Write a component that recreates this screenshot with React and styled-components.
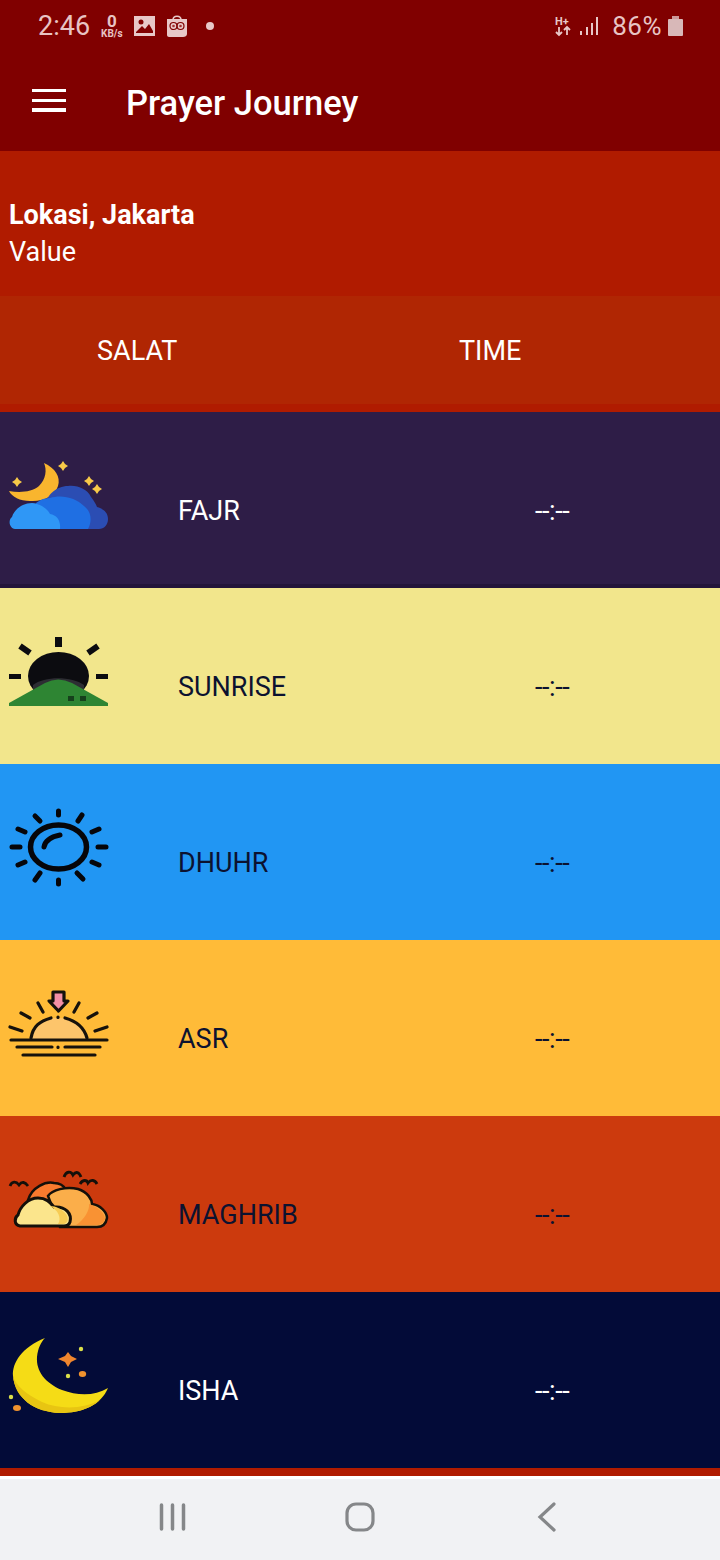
import styled, { createGlobalStyle } from 'styled-components'
import React from 'react'

const GlobalStyle = createGlobalStyle`
    html, body {
        margin: 0;
        padding: 0;
        background: #f1f2f4;
        font-family: Roboto, "Liberation Sans", sans-serif;
    }
    * { box-sizing: border-box; }
`

const Sparkle = ({ x, y, r = 5, fill = '#f7c948' }) => {
    const k = r * 0.4
    return (
        <path d={`M${x} ${y - r} L${x + k} ${y - k} L${x + r} ${y} L${x + k} ${y + k} L${x} ${y + r} L${x - k} ${y + k} L${x - r} ${y} L${x - k} ${y - k}Z`} fill={fill} />
    )
}

const FajrIcon = () => (
    <IconSvg viewBox="0 0 120 90">
        <path d="M44 13C55 18 61 27 58 36C55 46 43 52 30 51C20 51 12 47 9 41C20 43 32 42 39 36C46 29 47 20 44 13Z" fill="#f9b52e" />
        <path d="M44 62C44 46 56 36 68 36C78 35 87 39 91 47C94 51 96 54 97 57C104 59 108 63 108 69C108 75 104 79 99 79H50Z" fill="#2b4db3" />
        <path d="M30 79C26 60 36 48 50 48C62 44 76 48 84 56C92 62 92 72 88 79Z" fill="#1f6fe3" />
        <path d="M15 79C9 78 8 70 12 67C14 60 22 53 32 53C42 54 48 60 50 64C57 65 61 71 60 79Z" fill="#2f97f6" />
        <Sparkle x={63} y={16} />
        <Sparkle x={17} y={32} />
        <Sparkle x={89} y={31} />
        <Sparkle x={97} y={39} />
    </IconSvg>
)

const SunriseIcon = () => (
    <IconSvg viewBox="0 0 120 90">
        <ellipse cx="58.500" cy="51" rx="30.500" ry="24" fill="#0c0c10" />
        <path d="M33 60C44 51 72 51 84 60L84 66H33Z" fill="#2d2d33" />
        <path d="M9 78L45 58Q58 51 72 58L108 78V81H9Z" fill="#2e8533" />
        <rect x="68" y="71" width="6" height="5" fill="#16401c" />
        <rect x="80" y="71" width="6" height="5" fill="#16401c" />
        <rect x="55" y="12" width="7" height="10" fill="#0c0c10" />
        <rect x="9" y="49" width="12" height="5" fill="#0c0c10" />
        <rect x="96" y="49" width="12" height="5" fill="#0c0c10" />
        <path d="M20 21L30 28M98 21L88 28" stroke="#0c0c10" strokeWidth="6" />
    </IconSvg>
)

const DhuhrIcon = () => (
    <IconSvg viewBox="0 0 120 90" fill="none" stroke="#06060a" strokeLinecap="round">
        <ellipse cx="58.500" cy="47" rx="28" ry="22" strokeWidth="5.500" />
        <path d="M44 47C45 41 50 37 60 35" strokeWidth="5" />
        <path d="M58.500 11V15M58.500 80V84M12 47H20M98 47H106M35 16L40 21M82 15L78 21M18 29L25 32M99 29L92 32M18 65L25 62M99 65L92 62M35 80L40 73M83 79L77 73" strokeWidth="5" />
    </IconSvg>
)

const AsrIcon = () => (
    <IconSvg viewBox="0 0 120 90">
        <path d="M31 59C33 46 44 38 58 38C72 38 84 46 87 59Z" fill="#fdc56b" />
        <g fill="none" stroke="#16120c" strokeLinecap="round" strokeWidth="3.200">
            <path d="M31 58C33 46 40 41 51 38M65 38C76 41 84 47 87 58" />
            <path d="M11 60H107M17 67H52M65 67H100M23 75H95" />
            <path d="M38 23L43 32M79 23L74 32M21 33L30 38M97 33L88 38M10 47L22 51M107 47L95 51" />
            <path d="M58 37V37.500M58 67V67.500" />
        </g>
        <path d="M53 12H64V21H68L58.500 31L49 21H53Z" fill="#f48fa5" stroke="#16120c" strokeWidth="3.200" strokeLinejoin="round" />
    </IconSvg>
)

const MaghribIcon = () => (
    <IconSvg viewBox="0 0 120 80">
        <path d="M28 40C32 27 46 21 54 23C60 23 64 26 66 30L70 60H30Z" fill="#fa7a2e" stroke="#14100a" strokeWidth="2.500" />
        <path d="M48 36C52 30 66 26 78 29C88 32 92 40 92 44C100 45 107 52 107 58C106 64 102 67 97 67H60Z" fill="#fbae4a" stroke="#14100a" strokeWidth="2.500" />
        <path d="M76 65C84 60 90 50 89 44C96 46 105 52 105 59C104 63 100 65 97 65Z" fill="#f99233" />
        <path d="M20 66C14 65 14 58 18 55C20 47 28 38 38 38C46 38 50 42 54 47C66 46 72 54 70 62C69 65 67 66 64 66Z" fill="#fbe58c" stroke="#14100a" strokeWidth="3" />
        <path d="M50 46C56 46 62 49 66 54C69 58 68 63 64 64H58C62 58 58 50 50 46Z" fill="#f7cc55" />
        <path d="M10 26C12 21 16 21 19 25C22 21 25 22 28 26M64 17C66 11 71 11 73 15C76 11 79 12 81 17M80 24C83 19 87 20 88 23C91 19 95 20 97 24" fill="none" stroke="#14100a" strokeWidth="2.800" />
    </IconSvg>
)

const IshaIcon = () => (
    <IconSvg viewBox="0 0 120 90">
        <path d="M45 8C22 17 12 33 13 46C15 68 34 82 60 83C83 83 101 75 108 58C95 66 78 66 62 60C45 53 36 41 37 27C38 18 41 12 45 8Z" fill="#f5dc16" />
        <path d="M13 46C15 68 34 82 60 83C76 83 90 79 100 70C84 79 60 80 42 72C26 64 16 56 13 46Z" fill="#e8c512" />
        <path d="M68 22L71 26L77 29L71 32L68 37L65 32L58 29L65 26Z" fill="#f0862e" />
        <ellipse cx="82.500" cy="44" rx="3.700" ry="3" fill="#f0922e" />
        <ellipse cx="17" cy="78" rx="4" ry="3" fill="#f0922e" />
        <circle cx="81" cy="19" r="2.200" fill="#dbe04a" />
        <circle cx="68" cy="46" r="2.200" fill="#dbe04a" />
        <circle cx="11" cy="67" r="2.200" fill="#dbe04a" />
    </IconSvg>
)

const prayers = [
    { name: 'FAJR', bg: '#2e1d47', edge: '#24153a', color: '#ffffff', Icon: FajrIcon, shift: 6 },
    { name: 'SUNRISE', bg: '#f2e68c', color: '#0c1230', Icon: SunriseIcon, shift: 8 },
    { name: 'DHUHR', bg: '#2196f3', color: '#0c1230', Icon: DhuhrIcon, shift: 10 },
    { name: 'ASR', bg: '#ffbb38', color: '#0c1230', Icon: AsrIcon, shift: 2 },
    { name: 'MAGHRIB', bg: '#cc3a0d', color: '#0c1230', Icon: MaghribIcon, shift: -6 },
    { name: 'ISHA', bg: '#030b38', color: '#ffffff', Icon: IshaIcon, shift: 6 },
]

export default function App() {
    return (
        <Page>
            <GlobalStyle />
            <AppBar>
                <StatusBar>
                    <StatusGroup>
                        <Clock>2:46</Clock>
                        <NetSpeed><b>0</b><span>KB/s</span></NetSpeed>
                        <svg width="21" height="20" viewBox="0 0 21 20">
                            <rect width="21" height="20" fill="#e8c8c8" />
                            <circle cx="7" cy="6" r="2.500" fill="#800000" />
                            <path d="M2 16L8 10L11 13L15 8L19 15V17H2Z" fill="#800000" />
                        </svg>
                        <BagIcon viewBox="0 0 22 24">
                            <path d="M7 6C7 1 15 1 15 6" fill="none" stroke="#e8c8c8" strokeWidth="1.500" />
                            <path d="M1 5H21V20C21 22 19 23 17 23H3C2 23 1 22 1 21Z" fill="#e8c8c8" />
                            <circle cx="7.500" cy="12" r="3.500" fill="none" stroke="#800000" strokeWidth="1.200" />
                            <circle cx="14.500" cy="12" r="3.500" fill="none" stroke="#800000" strokeWidth="1.200" />
                            <circle cx="7.500" cy="12" r="1.300" fill="#a03030" />
                            <circle cx="14.500" cy="12" r="1.300" fill="#a03030" />
                        </BagIcon>
                        <Dot />
                    </StatusGroup>
                    <StatusRight>
                        <NetType viewBox="0 0 16 22">
                            <text x="0" y="10" fontFamily="Roboto, sans-serif" fontSize="11" fontWeight="700" fill="#e8c8c8">H+</text>
                            <path d="M4 12V20M1 17L4 20L7 17M12 20V12M9 15L12 12L15 15" fill="none" stroke="#e8c8c8" strokeWidth="1.800" />
                        </NetType>
                        <SignalIcon viewBox="0 0 20 20">
                            <path d="M2 15V19M8 11V19M13 7V19M18 1V19" stroke="#e8c8c8" strokeWidth="2" />
                        </SignalIcon>
                        <Battery>86%</Battery>
                        <svg width="15" height="20" viewBox="0 0 15 20">
                            <rect x="4" width="7" height="3" fill="#c99" />
                            <rect y="3" width="15" height="17" rx="1" fill="#d8b8b8" />
                        </svg>
                    </StatusRight>
                </StatusBar>
                <Toolbar>
                    <MenuButton><i /><i /><i /></MenuButton>
                    <Title>Prayer Journey</Title>
                </Toolbar>
            </AppBar>

            <Location>
                <strong>Lokasi, Jakarta</strong>
                <span>Value</span>
            </Location>

            <TableHead>
                <HeadSalat>SALAT</HeadSalat>
                <HeadTime>TIME</HeadTime>
            </TableHead>

            <List>
                {prayers.map(({ name, bg, edge, color, Icon, shift }) => (
                    <Row key={name} $bg={bg} $edge={edge} $color={color}>
                        <IconSlot $shift={shift}><Icon /></IconSlot>
                        <Name>{name}</Name>
                        <Time>--:--</Time>
                    </Row>
                ))}
            </List>

            <NavBar>
                <svg width="30" height="30" viewBox="0 0 30 30">
                    <path d="M4.500 3V27M15.500 3V27M26.500 3V27" stroke="#858789" strokeWidth="3.500" strokeLinecap="round" />
                </svg>
                <svg width="30" height="30" viewBox="0 0 30 30">
                    <rect x="2" y="2" width="26" height="26" rx="9" fill="none" stroke="#858789" strokeWidth="3.200" />
                </svg>
                <svg width="30" height="30" viewBox="0 0 30 30">
                    <path d="M21 2L7 15L21 28" fill="none" stroke="#858789" strokeWidth="3.200" strokeLinecap="round" />
                </svg>
            </NavBar>
        </Page>
    )
}

const Page = styled.div`
    width: 720px;
    height: 1560px;
    display: flex;
    flex-direction: column;
    overflow: hidden;
    background: #b01b00;
`

const AppBar = styled.header`
    height: 151px;
    background-color: #800000;
    color: #ffffff;
    flex-shrink: 0;
`

const StatusBar = styled.div`
    height: 52px;
    padding: 0 37px 0 38px;
    display: flex;
    align-items: center;
    justify-content: space-between;
`

const StatusGroup = styled.div`
    display: flex;
    align-items: center;
    gap: 11px;
`

const StatusRight = styled.div`
    display: flex;
    align-items: center;
`

const Clock = styled.span`
    font-size: 27px;
    color: #e8c4c4;
`

const NetSpeed = styled.span`
    display: flex;
    flex-direction: column;
    align-items: center;
    line-height: 1;
    color: #e8c4c4;
    b { font-size: 17px; font-weight: 700; line-height: 15px; }
    span { font-size: 10px; font-weight: 700; }
`

const BagIcon = styled.svg`
    width: 22px;
    height: 24px;
`

const Dot = styled.span`
    width: 8px;
    height: 8px;
    margin-left: 7px;
    border-radius: 50%;
    background: #e8c8c8;
`

const NetType = styled.svg`
    width: 16px;
    height: 22px;
    margin-right: 8px;
`

const SignalIcon = styled.svg`
    width: 20px;
    height: 20px;
    margin-right: 13px;
`

const Battery = styled.span`
    font-size: 26px;
    letter-spacing: 0.5px;
    margin-right: 6px;
    color: #e8c4c4;
`

const Toolbar = styled.div`
    height: 99px;
    padding: 0 0 0 32px;
    display: flex;
    align-items: flex-start;
    gap: 60px;
`

const MenuButton = styled.div`
    width: 34px;
    margin-top: 37px;
    display: flex;
    flex-direction: column;
    gap: 6.2px;
    i {
        display: block;
        height: 3.4px;
        background: #ffffff;
    }
`

const Title = styled.h1`
    margin: 30px 0 0;
    font-size: 34.5px;
    line-height: 42px;
    font-weight: 500;
`

const Location = styled.section`
    height: 145px;
    padding: 46px 9px 0;
    background-color: #b01b00;
    color: #ffffff;
    display: flex;
    flex-direction: column;
    flex-shrink: 0;
    font-size: 27px;
    line-height: 37px;
    strong { font-weight: 700; }
`

const TableHead = styled.div`
    height: 116px;
    border-bottom: 8px solid #b01b00;
    background-color: #b02603;
    color: #ffffff;
    font-size: 27px;
    display: flex;
    align-items: center;
    flex-shrink: 0;
`

const HeadSalat = styled.span`
    width: 459px;
    padding-left: 97px;
    margin-top: 2px;
`

const HeadTime = styled.span`
    margin-top: 2px;
`

const List = styled.div`
    display: flex;
    flex-direction: column;
    flex-shrink: 0;
`

const Row = styled.div`
    height: 176px;
    display: flex;
    align-items: center;
    background-color: ${({ $bg }) => $bg};
    color: ${({ $color }) => $color};
    border-bottom: 4px solid ${({ $edge, $bg }) => $edge || $bg};
    font-size: 27px;
`

const IconSlot = styled.div`
    width: 178px;
    height: 90px;
    flex-shrink: 0;
    margin-bottom: ${({ $shift }) => $shift}px;
`

const IconSvg = styled.svg`
    display: block;
    width: 120px;
`

const Name = styled.span`
    width: 357px;
    margin-top: 26px;
`

const Time = styled.span`
    margin-top: 26px;
    letter-spacing: -0.4px;
`

const NavBar = styled.nav`
    margin-top: 8px;
    padding-bottom: 6px;
    flex: 1;
    border-top: 3px solid #ffffff;
    background: #f1f2f4;
    display: flex;
    align-items: center;
    justify-content: center;
    gap: 158px;
`
